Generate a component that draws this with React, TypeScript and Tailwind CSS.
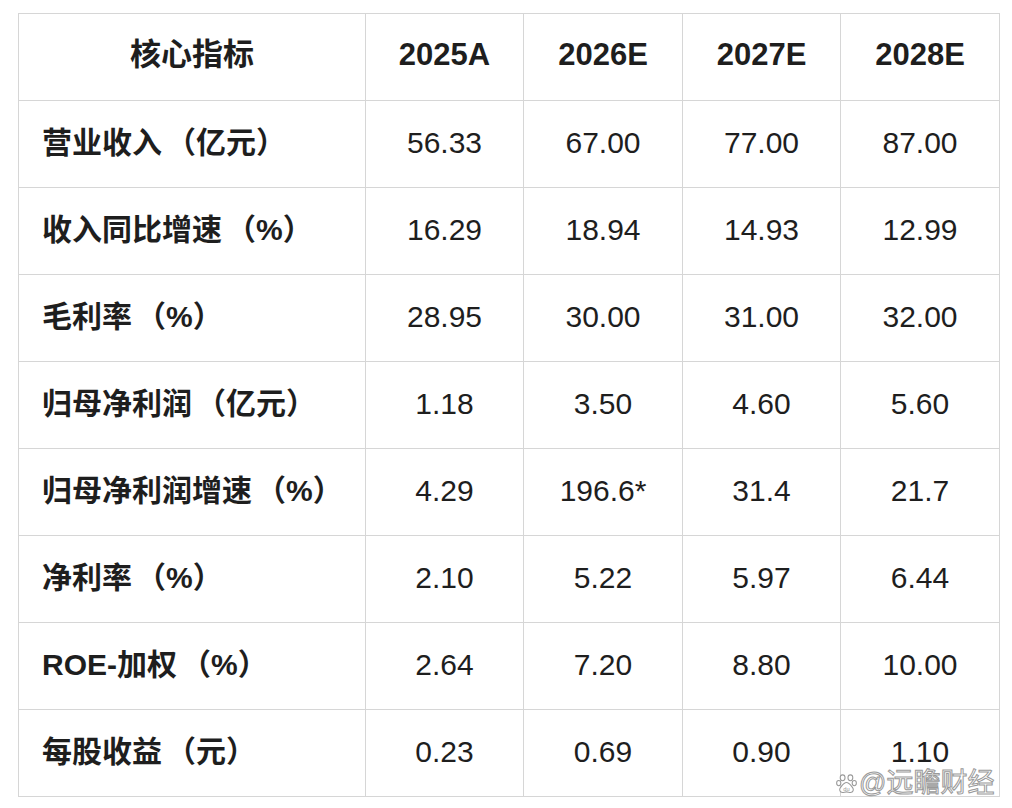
const headers = ["核心指标", "2025A", "2026E", "2027E", "2028E"];

const rows = [
  ["营业收入（亿元）", "56.33", "67.00", "77.00", "87.00"],
  ["收入同比增速（%）", "16.29", "18.94", "14.93", "12.99"],
  ["毛利率（%）", "28.95", "30.00", "31.00", "32.00"],
  ["归母净利润（亿元）", "1.18", "3.50", "4.60", "5.60"],
  ["归母净利润增速（%）", "4.29", "196.6*", "31.4", "21.7"],
  ["净利率（%）", "2.10", "5.22", "5.97", "6.44"],
  ["ROE-加权（%）", "2.64", "7.20", "8.80", "10.00"],
  ["每股收益（元）", "0.23", "0.69", "0.90", "1.10"],
];

const font = "font-['Liberation_Sans','Noto_Sans_CJK_SC',sans-serif]";

function Label({ text }: { text: string }) {
  const i = text.indexOf("（");
  if (i < 0) return <>{text}</>;
  return (
    <>
      {text.slice(0, i)}
      <span className="ml-[4px]">{text.slice(i)}</span>
    </>
  );
}

function Paw() {
  return (
    <svg width="21" height="20" viewBox="0 0 20 19" className="shrink-0">
      <g fill="#fff" stroke="#9a9a9a" strokeWidth="1">
        <ellipse cx="6.3" cy="3.6" rx="2.3" ry="2.8" />
        <ellipse cx="13.7" cy="3.6" rx="2.3" ry="2.8" />
        <ellipse cx="2.6" cy="8.6" rx="2" ry="2.5" />
        <ellipse cx="17.4" cy="8.6" rx="2" ry="2.5" />
        <path d="M10 8c-2.6 0-4.2 3-5.8 5-1.4 1.8-.6 4.6 2 4.6 1.4 0 2.4-.6 3.8-.6s2.4.6 3.8.6c2.6 0 3.4-2.8 2-4.6-1.6-2-3.2-5-5.8-5z" />
      </g>
      <text x="10" y="16" textAnchor="middle" fontSize="5.5" fill="#9a9a9a" fontFamily="Liberation Sans, sans-serif">
        du
      </text>
    </svg>
  );
}

export default function App() {
  return (
    <div className={`relative h-[808px] w-[1012px] bg-white text-[#1e1e1e] ${font}`}>
      <table className="ml-[18px] mt-[13px] w-[981px] table-fixed border-collapse">
        <colgroup>
          <col className="w-[347px]" />
          <col className="w-[158px]" />
          <col className="w-[159px]" />
          <col className="w-[158px]" />
          <col className="w-[159px]" />
        </colgroup>
        <thead>
          <tr className="h-[87px]">
            {headers.map((h) => (
              <th key={h} className="border border-[#d6d6d6] pb-[4px] text-center text-[31px] font-bold">
                {h}
              </th>
            ))}
          </tr>
        </thead>
        <tbody>
          {rows.map((row) => (
            <tr key={row[0]} className="h-[87px]">
              <td className="border border-[#d6d6d6] pb-[4px] pl-[23px] text-left text-[30px] font-bold">
                <Label text={row[0]} />
              </td>
              {row.slice(1).map((v, i) => (
                <td key={i} className="border border-[#d6d6d6] pb-[4px] text-center text-[30px]">
                  {v}
                </td>
              ))}
            </tr>
          ))}
        </tbody>
      </table>

      {/* watermark */}
      <div className="absolute left-[836px] top-[757px] flex items-center gap-[2px]">
        <Paw />
        <span className="text-[27px] leading-none text-white [-webkit-text-stroke:1px_#9a9a9a]">@远瞻财经</span>
      </div>
    </div>
  );
}
